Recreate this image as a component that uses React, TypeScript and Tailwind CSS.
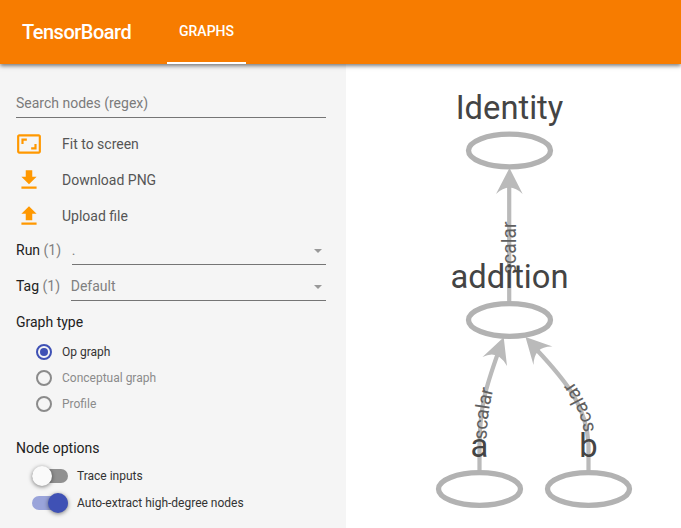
import React from "react";

const ACTIONS = [
  {
    label: "Fit to screen",
    icon: (
      <path d="M19 12h-2v3h-3v2h5v-5zM7 9h3V7H5v5h2V9zm14-6H3c-1.100 0-2 .9-2 2v14c0 1.100.9 2 2 2h18c1.100 0 2-.9 2-2V5c0-1.100-.9-2-2-2zm0 16.010H3V4.990h18v14.020z" />
    ),
  },
  {
    label: "Download PNG",
    icon: <path d="M19 9h-4V3H9v6H5l7 7 7-7zM5 18v2h14v-2H5z" />,
  },
  {
    label: "Upload file",
    icon: <path d="M9 16h6v-6h4l-7-7-7 7h4zm-4 2h14v2H5z" />,
  },
];

function Dropdown({ label, value }: { label: string; value: string }) {
  return (
    <div className="flex h-[31px] items-stretch gap-[10.600px] text-sm">
      <div className="flex items-center whitespace-pre pt-px text-[#212121]">
        {label} <span className="text-[#808080]">(1)</span>
      </div>
      <div className="flex flex-1 items-center justify-between border-b border-[#757575] pt-px text-[#808080]">
        <span>{value}</span>
        <span className="mt-[3px] mr-1 border-x-[4px] border-t-[4px] border-x-transparent border-t-[#999999]" />
      </div>
    </div>
  );
}

function Radio({ label, checked }: { label: string; checked?: boolean }) {
  return (
    <div className="flex h-[26px] items-center gap-2.5 pl-5 text-xs">
      <span
        className={`flex size-4 items-center justify-center rounded-full border-2 ${
          checked ? "border-[#3f51b5]" : "border-[#8b8b8b]"
        }`}
      >
        {checked && <span className="size-2 rounded-full bg-[#3f51b5]" />}
      </span>
      <span className={checked ? "text-[#333333]" : "text-[#8b8b8b]"}>{label}</span>
    </div>
  );
}

function Toggle({ label, on }: { label: string; on?: boolean }) {
  return (
    <div className="flex h-[27px] items-center gap-[9px] pl-4 text-xs text-[#333333]">
      <span
        className={`flex h-3.5 w-9 items-center rounded-full ${
          on ? "justify-end bg-[#9aa4da]" : "justify-start bg-[#909090]"
        }`}
      >
        <span
          className={`size-5 shrink-0 rounded-full shadow-[0_1px_4px_rgba(0,0,0,0.5)] ${
            on ? "bg-[#3f51b5]" : "bg-[#fafafa]"
          }`}
        />
      </span>
      {label}
    </div>
  );
}

const NODES = [
  { name: "Identity", x: 509.5, y: 150.5 },
  { name: "addition", x: 509.5, y: 320 },
  { name: "a", x: 479.5, y: 489 },
  { name: "b", x: 588.5, y: 489 },
];

const EDGES = [
  { id: "edge-identity", d: "M509.200 302V184", offset: 28 },
  { id: "edge-a", d: "M479.500 471V445C480 405 486 387 498 353", offset: 31.5 },
  { id: "edge-b", d: "M588.500 471V445C587 407 567 382 536 349", offset: 38.5 },
];

const HEADS = [
  "M509.500 168L522.700 194Q509.500 181 496 194Z",
  "M503.700 337.300L507 366Q498 349 482.500 357Z",
  "M525.500 337L552.500 346.500Q534 346 533.500 365Z",
];

function Graph() {
  return (
    <svg viewBox="346 64 335 464" className="h-[464px] w-[335px]" fontFamily="Roboto, sans-serif">
      <g fill="none" stroke="#bababa" strokeWidth="4.200">
        {EDGES.map((e) => (
          <path key={e.id} id={e.id} d={e.d} />
        ))}
      </g>
      {HEADS.map((d) => (
        <path key={d} d={d} fill="#bababa" />
      ))}
      <g fontSize="19.400" fill="#606060">
        {EDGES.map((e) => (
          <text key={e.id} dy="7">
            <textPath href={`#${e.id}`} startOffset={e.offset}>
              scalar
            </textPath>
          </text>
        ))}
      </g>
      {NODES.map((n) => (
        <g key={n.name}>
          <ellipse cx={n.x} cy={n.y} rx="41" ry="16.300" fill="#fff" stroke="#b2b2b2" strokeWidth="5.300" />
          <text x={n.x} y={n.y - 32} textAnchor="middle" fontSize="32.700" fill="#444444">
            {n.name}
          </text>
        </g>
      ))}
    </svg>
  );
}

export default function App() {
  return (
    <div className="flex h-[528px] w-[681px] flex-col overflow-hidden bg-white font-[Roboto,sans-serif]">
      <header className="z-10 flex h-16 shrink-0 bg-[#f77c00] pl-[22px] text-white shadow-[0_2px_4px_rgba(0,0,0,0.5)]">
        <h1 className="w-[145px] text-xl leading-[64px] font-medium tracking-[-0.5px]">TensorBoard</h1>
        <div className="w-[79px] border-b-2 border-white text-center text-sm leading-[62px] font-medium">GRAPHS</div>
      </header>
      <div className="flex flex-1">
        <aside className="w-[346px] bg-[#f5f5f5] pt-6 pr-5 pl-4">
          <div className="flex h-[30px] items-center border-b border-[#757575] text-sm text-[#7b7b7b]">
            Search nodes (regex)
          </div>
          <div className="mt-2">
            {ACTIONS.map((a) => (
              <div key={a.label} className="flex h-9 items-center text-sm text-[#555555]">
                <svg viewBox="0 0 24 24" className="mr-5 size-[26px] fill-[#ff9800]">
                  {a.icon}
                </svg>
                {a.label}
              </div>
            ))}
          </div>
          <Dropdown label="Run" value="." />
          <div className="h-[5px]" />
          <Dropdown label="Tag" value="Default" />
          <h2 className="mt-[11px] h-5 text-sm text-[#212121]">Graph type</h2>
          <div className="mt-[7px]">
            <Radio label="Op graph" checked />
            <Radio label="Conceptual graph" />
            <Radio label="Profile" />
          </div>
          <h2 className="mt-[21px] h-5 text-sm text-[#212121]">Node options</h2>
          <div className="mt-1">
            <Toggle label="Trace inputs" />
            <Toggle label="Auto-extract high-degree nodes" on />
          </div>
        </aside>
        <Graph />
      </div>
    </div>
  );
}
